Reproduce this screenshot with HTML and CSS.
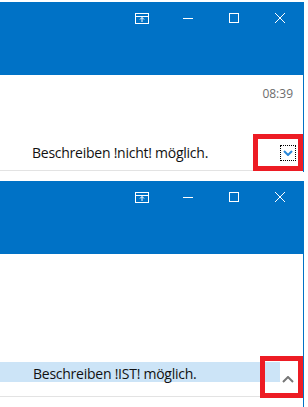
FILE: index.html
```html
<!DOCTYPE html>
<html lang="de">
<head>
  <meta charset="UTF-8">
  <title>Beschreiben</title>
  <link rel="stylesheet" href="styles.css">
</head>
<body>
  <!-- Erstes Fenster: eingeklappt -->
  <section class="window win-one">
    <div class="titlebar">
      <span class="caption-btn">
        <svg width="14" height="11" viewBox="0 0 14 11"><rect x="0.5" y="0.5" width="13" height="10" fill="none" stroke="#fff"/><path d="M1 3.5H13M7 9V4.5M5 6.5L7 4.5L9 6.5" fill="none" stroke="#fff"/></svg>
      </span>
      <span class="caption-btn">
        <svg width="10" height="10" viewBox="0 0 10 10"><path d="M0 5.5H10" stroke="#fff"/></svg>
      </span>
      <span class="caption-btn">
        <svg width="10" height="10" viewBox="0 0 10 10"><rect x="0.5" y="0.5" width="9" height="9" fill="none" stroke="#fff"/></svg>
      </span>
      <span class="caption-btn">
        <svg width="10" height="10" viewBox="0 0 10 10"><path d="M0 0L10 10M10 0L0 10" stroke="#fff"/></svg>
      </span>
    </div>
    <div class="content content-one">
      <div class="time-row">08:39</div>
      <div class="message-row">
        <span class="message-text">Beschreiben !nicht! möglich.</span>
        <span class="expand-btn">
          <svg width="10" height="6" viewBox="0 0 10 6"><path d="M1 1L5 5L9 1" fill="none" stroke="#2b88d8" stroke-width="2"/></svg>
        </span>
      </div>
    </div>
    <div class="marker marker-one"></div>
  </section>

  <!-- Zweites Fenster: ausgeklappt -->
  <section class="window win-two">
    <div class="titlebar">
      <span class="caption-btn">
        <svg width="14" height="11" viewBox="0 0 14 11"><rect x="0.5" y="0.5" width="13" height="10" fill="none" stroke="#fff"/><path d="M1 3.5H13M7 9V4.5M5 6.5L7 4.5L9 6.5" fill="none" stroke="#fff"/></svg>
      </span>
      <span class="caption-btn">
        <svg width="10" height="10" viewBox="0 0 10 10"><path d="M0 5.5H10" stroke="#fff"/></svg>
      </span>
      <span class="caption-btn">
        <svg width="10" height="10" viewBox="0 0 10 10"><rect x="0.5" y="0.5" width="9" height="9" fill="none" stroke="#fff"/></svg>
      </span>
      <span class="caption-btn">
        <svg width="10" height="10" viewBox="0 0 10 10"><path d="M0 0L10 10M10 0L0 10" stroke="#fff"/></svg>
      </span>
    </div>
    <div class="content content-two">
      <div class="expanded-row">
        <div class="message-highlight">
          <span class="message-text">Beschreiben !IST! möglich.</span>
        </div>
        <span class="collapse-btn">
          <svg width="12" height="7" viewBox="0 0 12 7"><path d="M1 6L6 1L11 6" fill="none" stroke="#777" stroke-width="2"/></svg>
        </span>
      </div>
    </div>
    <div class="marker marker-two"></div>
  </section>
</body>
</html>
```

FILE: styles.css
```css
/* Grundlayout */
body {
  margin: 0;
  background: #fff;
  font-family: "Open Sans", "Noto Sans", sans-serif;
  color: #111;
}
.window {
  position: relative;
  width: 304px;
}
.win-one {
  padding-top: 2px;
  margin-bottom: 9px;
}
/* Blaue Titelleiste */
.titlebar {
  height: 73px;
  background: #0072c6;
  display: flex;
  justify-content: flex-end;
  align-items: flex-start;
  padding-right: 1px;
}
.caption-btn {
  width: 46px;
  height: 32px;
  display: flex;
  align-items: center;
  justify-content: center;
}
.caption-btn svg {
  display: block;
}
.content {
  border-right: 1px solid #0072c6;
}
.content-one {
  padding-bottom: 1px;
}
.content-two {
  height: 153px;
  padding-top: 108px;
  box-sizing: border-box;
}
.time-row {
  height: 67px;
  box-sizing: border-box;
  padding: 11px 10px 0 0;
  text-align: right;
  font-size: 12px;
  line-height: 16px;
  color: #6d6d6d;
}
/* Nachrichtenzeile */
.message-row {
  height: 28px;
  display: flex;
  align-items: flex-start;
  padding-left: 32px;
  border-bottom: 1px solid #e3e3e3;
}
.message-text {
  font-size: 14px;
  line-height: 20px;
  letter-spacing: -0.25px;
}
.message-row .message-text {
  margin-top: 1px;
}
.expand-btn {
  margin: 3px 7px 0 auto;
  width: 16px;
  height: 16px;
  box-sizing: border-box;
  border: 1px dotted #000;
  display: flex;
  align-items: center;
  justify-content: center;
}
.expanded-row {
  height: 34px;
  display: flex;
  align-items: flex-start;
  border-bottom: 1px solid #e3e3e3;
}
.message-highlight {
  width: 280px;
  height: 20px;
  padding-left: 33px;
  box-sizing: border-box;
  background: #cce4f7;
}
.message-highlight .message-text {
  line-height: 16px;
}
.collapse-btn {
  margin: 14px 0 0 2px;
  display: flex;
}
/* Rote Markierungen */
.marker {
  position: absolute;
  box-sizing: border-box;
  border: 5px solid #ed1c24;
}
.marker-one {
  left: 253px;
  top: 134px;
  width: 50px;
  height: 37px;
}
.marker-two {
  left: 260px;
  top: 175px;
  width: 43px;
  height: 42px;
}
```
